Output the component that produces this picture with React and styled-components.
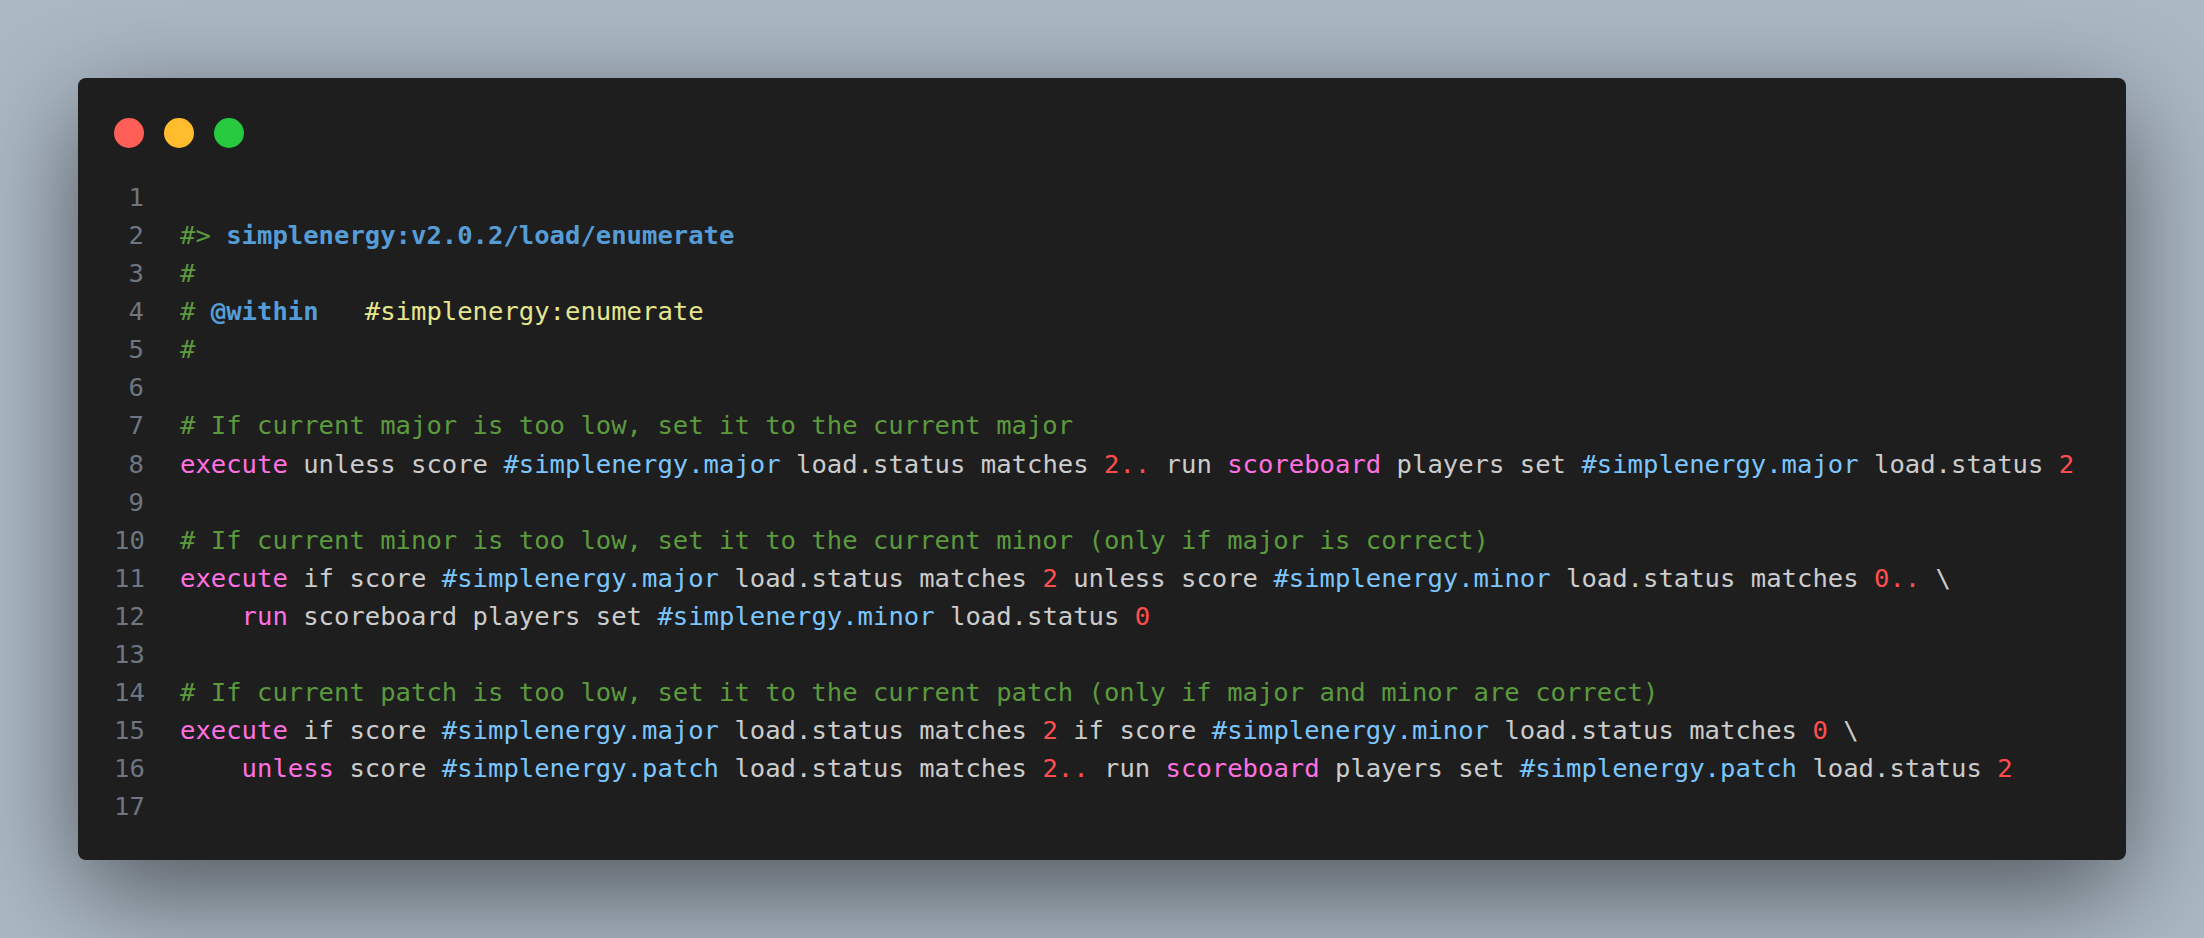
import React from "react";
import styled, { createGlobalStyle } from "styled-components";

const Global = createGlobalStyle`
  html, body { margin: 0; padding: 0; background: #acb9c5; }
`;
const Page = styled.main`
  width: 2204px; height: 938px; box-sizing: border-box; overflow: hidden;
  padding: 78px; background: #acb9c5;
`;
const Window = styled.section`
  height: 782px; box-sizing: border-box; background: #1e1e1e; border-radius: 8px;
  box-shadow: 0 32px 110px rgba(0,0,0,.54); padding: 40px 36px 0;
`;
const Controls = styled.div`display: flex; gap: 20px; margin-bottom: 30px;`;
const Dot = styled.span`
  width: 30px; height: 30px; border-radius: 50%; background: ${p => p.$c};
`;
const Code = styled.div`
  font-family: "DejaVu Sans Mono", monospace; font-size: 25.58px; line-height: 38.08px;
  white-space: pre; color: #cccccc;
`;
const Row = styled.div`display: flex; height: 38.08px;`;
const Num = styled.span`
  width: 30px; text-align: right; color: #6e7681; margin-right: 36px; flex: none;
`;
const colors = { c: "#5c9a3e", k: "#ff70e0", s: "#7cc6ff", n: "#ff4d4d", b: "#569cd6", y: "#e6e68f" };
const Tok = styled.span`
  color: ${p => colors[p.$t] || "inherit"};
  font-weight: ${p => (p.$t === "b" ? 700 : 400)};
`;

const S1 = "#simplenergy.major", S2 = "#simplenergy.minor", S3 = "#simplenergy.patch";
const lines = [
  [],
  [["c", "#> "], ["b", "simplenergy:v2.0.2/load/enumerate"]],
  [["c", "#"]],
  [["c", "# "], ["b", "@within"], ["", "   "], ["y", "#simplenergy:enumerate"]],
  [["c", "#"]],
  [],
  [["c", "# If current major is too low, set it to the current major"]],
  [["k", "execute"], ["", " unless score "], ["s", S1], ["", " load.status matches "], ["n", "2.."], ["", " run "], ["k", "scoreboard"], ["", " players set "], ["s", S1], ["", " load.status "], ["n", "2"]],
  [],
  [["c", "# If current minor is too low, set it to the current minor (only if major is correct)"]],
  [["k", "execute"], ["", " if score "], ["s", S1], ["", " load.status matches "], ["n", "2"], ["", " unless score "], ["s", S2], ["", " load.status matches "], ["n", "0.."], ["", " \\"]],
  [["", "    "], ["k", "run"], ["", " scoreboard players set "], ["s", S2], ["", " load.status "], ["n", "0"]],
  [],
  [["c", "# If current patch is too low, set it to the current patch (only if major and minor are correct)"]],
  [["k", "execute"], ["", " if score "], ["s", S1], ["", " load.status matches "], ["n", "2"], ["", " if score "], ["s", S2], ["", " load.status matches "], ["n", "0"], ["", " \\"]],
  [["", "    "], ["k", "unless"], ["", " score "], ["s", S3], ["", " load.status matches "], ["n", "2.."], ["", " run "], ["k", "scoreboard"], ["", " players set "], ["s", S3], ["", " load.status "], ["n", "2"]],
  [],
];

export default function App() {
  return (
    <Page>
      <Global />
      <Window>
        <Controls>
          <Dot $c="#ff5f56" /><Dot $c="#ffbd2e" /><Dot $c="#27c93f" />
        </Controls>
        <Code>
          {lines.map((l, i) => (
            <Row key={i}>
              <Num>{i + 1}</Num>
              <span>{l.map(([t, s], j) => <Tok key={j} $t={t}>{s}</Tok>)}</span>
            </Row>
          ))}
        </Code>
      </Window>
    </Page>
  );
}
